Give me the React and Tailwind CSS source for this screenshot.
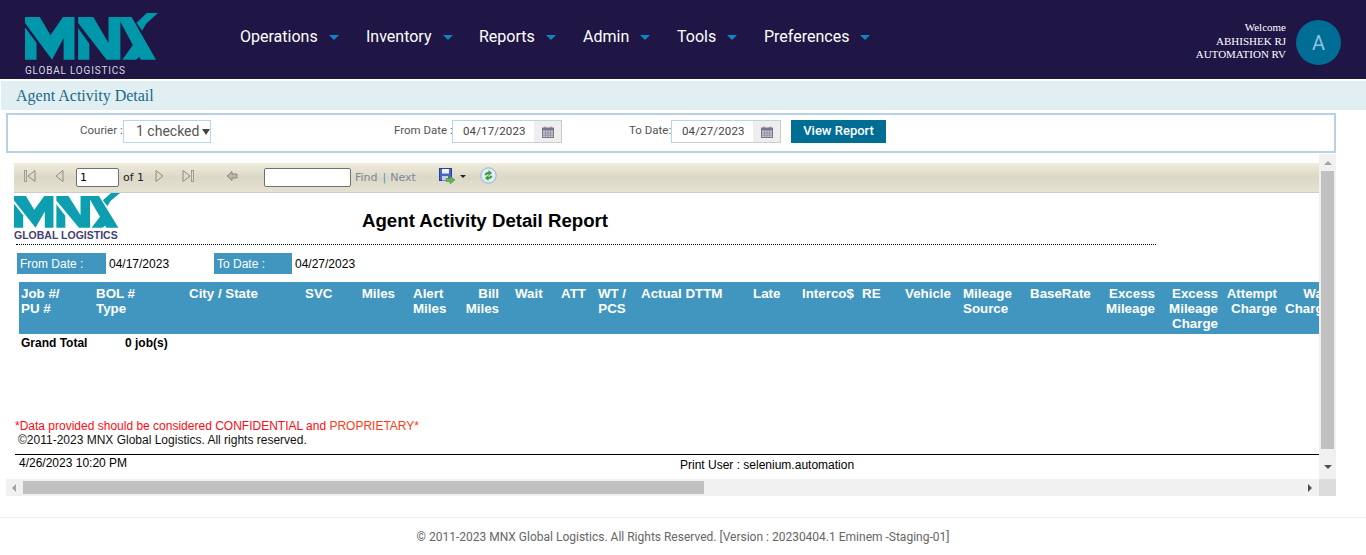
/* ================= CONFIG ================= */

const NAV_ITEMS = [
  { label: "Operations", width: "w-[126px]" },
  { label: "Inventory", width: "w-[113px]" },
  { label: "Reports", width: "w-[104px]" },
  { label: "Admin", width: "w-[94px]" },
  { label: "Tools", width: "w-[87px]" },
  { label: "Preferences", width: "w-[120px]" },
];

const COLUMNS = [
  { lines: ["Job #/", "PU #"], cls: "w-[75px] pl-[2px]" },
  { lines: ["BOL #", "Type"], cls: "w-[93px] pl-[2px]" },
  { lines: ["City / State"], cls: "w-[116px] pl-[2px]" },
  { lines: ["SVC"], cls: "w-[42px] pl-[2px]" },
  { lines: ["Miles"], cls: "w-[52px] pr-[2px] text-right" },
  { lines: ["Alert", "Miles"], cls: "w-[52px] pl-[16px]" },
  { lines: ["Bill", "Miles"], cls: "w-[52px] pr-[2px] text-right" },
  { lines: ["Wait"], cls: "w-[50px] pl-[14px]" },
  { lines: ["ATT"], cls: "w-[44px] pl-[10px]" },
  { lines: ["WT /", "PCS"], cls: "w-[34px] text-center" },
  { lines: ["Actual DTTM"], cls: "w-[116px] pl-[12px]" },
  { lines: ["Late"], cls: "w-[50px] pl-[8px]" },
  { lines: ["Interco$"], cls: "w-[65px] pl-[7px]" },
  { lines: ["RE"], cls: "w-[43px] pl-[2px]" },
  { lines: ["Vehicle"], cls: "w-[58px] pl-[2px]" },
  { lines: ["Mileage", "Source"], cls: "w-[67px] pl-[2px]" },
  { lines: ["BaseRate"], cls: "w-[72px] pl-[2px]" },
  { lines: ["Excess", "Mileage"], cls: "w-[57px] pr-[2px] text-right" },
  { lines: ["Excess", "Mileage", "Charge"], cls: "w-[63px] pr-[2px] text-right" },
  { lines: ["Attempt", "Charge"], cls: "w-[59px] pr-[2px] text-right" },
  { lines: ["Wait", "Charge"], cls: "w-[54px] pr-[2px] text-right" },
];

const ARIAL = "font-['Liberation_Sans',Arial,sans-serif]";
const ROBOTO = "font-['Roboto',sans-serif]";
const SERIF = "font-['Liberation_Serif',serif]";

/* ================= COMPONENT ================= */

export default function App() {
  return (
    <div className={`h-[555px] overflow-hidden bg-white ${ROBOTO}`}>
      <Header />

      <div className={`mt-[2px] ml-[1px] flex h-[29px] items-center bg-[#e1eff3] pl-[15px] text-[16px] text-[#1a6a8a] ${SERIF}`}>
        Agent Activity Detail
      </div>

      <FilterBar />
      <ReportViewer />

      <footer className="mt-[21px] flex h-[38px] items-center justify-center border-t border-[#eeeeee] text-[12px] text-[#666666]">
        © 2011-2023 MNX Global Logistics. All Rights Reserved. [Version : 20230404.1 Eminem -Staging-01]
      </footer>
    </div>
  );
}

/* ================= HEADER ================= */

function Header() {
  return (
    <header className="flex h-[79px] items-start bg-[#1f1646]">
      <div className="ml-[25px] mt-[13px] w-[215px]">
        <MnxLogo className="h-[47px] w-[133px]" color="#0097aa" />
        <div className="mt-[5px] text-[10px] leading-[12px] tracking-[0.8px] text-[#d8d8e0]">
          GLOBAL LOGISTICS
        </div>
      </div>

      <nav className="mt-[27px] flex">
        {NAV_ITEMS.map((item) => (
          <div key={item.label} className={`flex items-center text-[16px] leading-[19px] text-white ${item.width}`}>
            {item.label}
            <span className="ml-[11px] mt-[1px] h-0 w-0 border-x-[5px] border-t-[5px] border-x-transparent border-t-[#0a86c4]" />
          </div>
        ))}
      </nav>

      <div className={`ml-auto mt-[21px] text-right text-[11px] leading-[13.6px] text-white ${SERIF}`}>
        <div>Welcome</div>
        <div>ABHISHEK RJ</div>
        <div>AUTOMATION RV</div>
      </div>

      <div className="ml-[10px] mr-[25px] mt-[20px] flex h-[45px] w-[45px] items-center justify-center rounded-full bg-[#006d94] text-[20px] text-[#8fc3e0]">
        A
      </div>
    </header>
  );
}

function MnxLogo({ className, color }) {
  return (
    <svg viewBox="15 15 403 141" preserveAspectRatio="none" className={className} fill={color}>
      {/* M */}
      <polygon points="15,27 60,27 92,82 130,27 165,27 165,155 132,155 132,90 97,155 15,45" />
      <polygon points="15,58 50,105 50,155 15,155" />
      {/* N */}
      <polygon points="176,27 222,27 268,105 268,27 304,27 304,155 262,155 176,45" />
      <polygon points="176,60 210,107 210,155 176,155" />
      {/* X */}
      <polygon points="296,27 338,27 412,155 366,155" />
      <polygon points="353,44 384,15 418,15 382,47 370,68" />
      <polygon points="310,155 344,108 366,142 352,155" />
    </svg>
  );
}

/* ================= FILTER BAR ================= */

function FilterBar() {
  return (
    <div className="ml-[6px] mt-[3px] flex h-[40px] w-[1330px] items-start whitespace-nowrap border-2 border-[#b9d1e6] pt-[5px] text-[11.5px] leading-[21px] text-[#555555]">
      <span className="ml-[72px] w-[43px] shrink-0">Courier :</span>
      <div className="flex h-[23px] w-[88px] shrink-0 items-center border border-[#b5d9e2] pb-[2px] pl-[12px] text-[14px] leading-none">
        1 checked
        <span className="ml-[3px] mt-[3px] h-0 w-0 border-x-[4px] border-t-[6px] border-x-transparent border-t-[#444444]" />
      </div>

      <span className="ml-[183px] w-[58px] shrink-0">From Date :</span>
      <DateInput value="04/17/2023" />

      <span className="ml-[67px] w-[42px] shrink-0">To Date:</span>
      <DateInput value="04/27/2023" />

      <button className="ml-[10px] h-[23px] w-[95px] shrink-0 bg-[#006d94] pb-[2px] text-[13px] font-medium leading-none text-white">
        View Report
      </button>
    </div>
  );
}

function DateInput({ value }) {
  return (
    <div className="flex h-[23px] w-[110px] shrink-0 border border-[#b5d9e2] border-r-[#cccccc] border-b-[#cccccc] text-[11.5px] text-[#444444]">
      <div className="flex w-[81px] items-center pl-[10px] tracking-[0.15px]">{value}</div>
      <div className="flex flex-1 items-center justify-center bg-[#eeeeee]">
        <svg viewBox="0 0 12 12" className="h-[12px] w-[12px]">
          <rect x="0.5" y="2" width="11" height="9.5" fill="#c9c9d6" stroke="#77778a" />
          <rect x="0.5" y="2" width="11" height="2.5" fill="#77778a" />
          <path d="M3 .5v2M9 .5v2" stroke="#77778a" />
          <path d="M.5 7h11M.5 9.2h11M3.6 4.5v7M6 4.5v7M8.4 4.5v7" stroke="#77778a" strokeWidth="0.6" />
        </svg>
      </div>
    </div>
  );
}

/* ================= REPORT VIEWER ================= */

function ReportViewer() {
  return (
    <div className="ml-[6px] mt-[1px] w-[1330px]">
      <div className="flex h-[325px]">
        <div className={`relative w-[1313px] overflow-hidden pl-[8px] pt-[9px] text-black ${ARIAL}`}>
          <Toolbar />
          <ReportBody />
        </div>
        <VerticalScrollbar />
      </div>
      <HorizontalScrollbar />
    </div>
  );
}

function Toolbar() {
  return (
    <div className="flex h-[30px] items-center border-b border-[#cccccc] bg-gradient-to-b from-[#f1eddd] via-[#dcd8c7] to-[#e6e2d3] font-['DejaVu_Sans',sans-serif] text-[11px]">
      <NavIcon className="ml-[10px]" bar="left" />
      <NavIcon className="ml-[14px]" />
      <div className="ml-[10px] flex h-[19px] w-[43px] items-center rounded-[2px] border border-[#707070] bg-white pl-[3px] pt-[2px]">1</div>
      <span className="ml-[4px] mt-[2px] w-[22px] text-[#222222]">of 1</span>
      <NavIcon className="ml-[8px]" flip />
      <NavIcon className="ml-[13px]" flip bar="right" />
      <svg viewBox="0 0 12 12" className="ml-[32px] -mt-[4px] h-[12px] w-[12px]">
        <path d="M1 6 6 1.5V4h5v4H6v2.5z" fill="#b9b6a8" stroke="#8a8a86" />
      </svg>
      <div className="ml-[26px] h-[19px] w-[87px] rounded-[2px] border border-[#707070] bg-white" />
      <span className="ml-[4px] mt-[2px] text-[#7d8894]">Find</span>
      <span className="ml-[5px] mt-[2px] text-[#5b93b8]">|</span>
      <span className="ml-[4px] mt-[2px] text-[#7d8894]">Next</span>
      <SaveIcon />
      <span className="ml-[4px] -mt-[3px] h-0 w-0 border-x-[3px] border-t-[3px] border-x-transparent border-t-[#222222]" />
      <RefreshIcon />
    </div>
  );
}

function NavIcon({ className, flip, bar }) {
  return (
    <svg viewBox="0 0 14 14" className={`-mt-[4px] h-[14px] w-[14px] ${className} ${flip ? "-scale-x-100" : ""}`}>
      <path d="M4 7 11 1.5v11z" fill="#dcd9cb" stroke="#8d8d88" />
      {bar && <rect x="0.5" y="1.5" width="2" height="11" fill="#dcd9cb" stroke="#8d8d88" strokeWidth="0.8" />}
    </svg>
  );
}

function SaveIcon() {
  return (
    <svg viewBox="0 0 17 17" className="ml-[23px] -mt-[2px] h-[17px] w-[17px]">
      <rect x="0.5" y="0.5" width="12" height="12" fill="#4a63c8" stroke="#2f3f8f" />
      <rect x="3" y="1" width="7" height="4.5" fill="#f2f4fb" />
      <rect x="3" y="8" width="6" height="4.5" fill="#c6cde8" />
      <path d="M7 10.5h4V8l5 4-5 4v-2.5H7z" fill="#62b456" stroke="#3f8a38" strokeWidth="0.5" />
    </svg>
  );
}

function RefreshIcon() {
  return (
    <svg viewBox="0 0 17 17" className="ml-[14px] -mt-[4px] h-[17px] w-[17px]">
      <circle cx="8.5" cy="8.5" r="7.7" fill="#e3edf7" stroke="#8db0dc" />
      <path d="M4.5 8a4 4 0 0 1 4-3V3l3.5 3-3.5 3V7a2.5 2.5 0 0 0-2 1.5z" fill="#3f9a3a" />
      <path d="M12.5 9a4 4 0 0 1-4 3v2L5 11l3.5-3v2a2.5 2.5 0 0 0 2-1.5z" fill="#3f9a3a" />
    </svg>
  );
}

function ReportBody() {
  return (
    <div className="text-[12px]">
      {/* logo + title */}
      <div className="flex h-[51px] items-start">
        <div className="w-[348px]">
          <MnxLogo className="h-[35px] w-[106px]" color="#0d9fb0" />
          <div className="mt-[2px] text-[10.5px] font-bold leading-[10px] text-[#443f72]">
            GLOBAL LOGISTICS
          </div>
        </div>
        <h1 className="mt-[17px] text-[18.67px] font-bold leading-[22px]">Agent Activity Detail Report</h1>
      </div>
      <div className="ml-[2px] w-[1140px] border-t border-dotted border-black" />

      {/* date range */}
      <div className="ml-[3px] mt-[8px] flex h-[21px] items-center">
        <div className="flex h-full w-[89px] items-center bg-[#4196c0] pl-[3px] text-white">From Date :</div>
        <span className="ml-[3px] w-[105px]">04/17/2023</span>
        <div className="flex h-full w-[78px] items-center bg-[#4196c0] pl-[3px] text-white">To Date :</div>
        <span className="ml-[3px]">04/27/2023</span>
      </div>

      {/* column headers */}
      <div className="ml-[5px] mt-[8px] flex h-[52px] overflow-hidden bg-[#4196c0] pt-[4px] text-[13.33px] font-bold leading-[15px] text-white">
        {COLUMNS.map((col, i) => (
          <div key={i} className={`shrink-0 ${col.cls}`}>
            {col.lines.map((line) => (
              <div key={line}>{line}</div>
            ))}
          </div>
        ))}
      </div>

      <div className="ml-[7px] mt-[2px] flex h-[14px] items-center font-bold">
        <span className="w-[104px]">Grand Total</span>
        <span>0 job(s)</span>
      </div>

      {/* notes */}
      <div className="ml-[1px] mt-[70px] leading-[13px]">
        <span className="text-[#ff0a14]">*Data provided should be considered CONFIDENTIAL and </span>
        <span className="text-[#ff3b12]">PROPRIETARY*</span>
      </div>
      <div className="ml-[4px] leading-[14px] text-[#111111]">©2011-2023 MNX Global Logistics. All rights reserved.</div>

      <div className="ml-[1px] mt-[7px] flex border-t border-black leading-[14px]">
        <span className="ml-[4px] mt-[1px] w-[661px]">4/26/2023 10:20 PM</span>
        <span className="mt-[3px]">Print User : selenium.automation</span>
      </div>
    </div>
  );
}

/* ================= SCROLLBARS ================= */

function VerticalScrollbar() {
  return (
    <div className="flex w-[17px] flex-col items-center bg-[#f1f1f1] pt-[7px]">
      <span className="h-0 w-0 border-x-[4px] border-b-[4px] border-x-transparent border-b-[#a3a3a3]" />
      <div className="mt-[6px] h-[278px] w-[13px] bg-[#c1c1c1]" />
      <span className="mt-[16px] h-0 w-0 border-x-[4px] border-t-[4px] border-x-transparent border-t-[#505050]" />
    </div>
  );
}

function HorizontalScrollbar() {
  return (
    <div className="flex h-[17px]">
      <div className="flex w-[1313px] items-center bg-[#f1f1f1]">
        <span className="ml-[6px] h-0 w-0 border-y-[4px] border-r-[4px] border-y-transparent border-r-[#a3a3a3]" />
        <div className="ml-[7px] h-[13px] w-[681px] bg-[#c1c1c1]" />
        <span className="ml-auto mr-[7px] h-0 w-0 border-y-[4px] border-l-[4px] border-y-transparent border-l-[#505050]" />
      </div>
      <div className="w-[17px] bg-[#dcdcdc]" />
    </div>
  );
}
